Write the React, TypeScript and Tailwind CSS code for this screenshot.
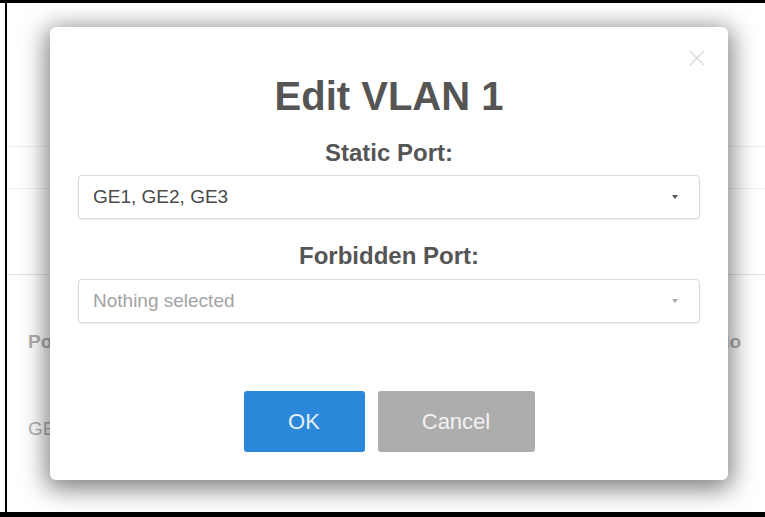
import React from "react";

function Caret({ light }: { light?: boolean }) {
  return (
    <span
      className={
        "w-0 h-0 border-x-[3px] border-t-[4px] border-x-transparent " +
        (light ? "border-t-[#aaa]" : "border-t-[#555]")
      }
    />
  );
}

function SelectBox({ value, placeholder }: { value?: string; placeholder?: string }) {
  return (
    <div className="w-full h-[44px] flex items-center justify-between pl-[14px] pr-[21px] bg-white border border-[#dcdcdc] rounded-[4px] shadow-[0_1px_2px_rgba(0,0,0,0.08)]">
      {value ? (
        <span className="text-[19px] text-[#4a4a4a]">{value}</span>
      ) : (
        <span className="text-[19px] text-[#a3a3a3]">{placeholder}</span>
      )}
      <Caret light={!value} />
    </div>
  );
}

export default function App() {
  return (
    <div className="relative w-[765px] h-[517px] bg-white border-t-[3px] border-b-[5px] border-black overflow-hidden font-['Liberation_Sans',Arial,sans-serif]">
      {/* page behind the dialog */}
      <div className="h-full ml-[5px] border-l-2 border-black text-[#b0b0b0]">
        <div className="h-[144px] border-b border-[#eee]" />
        <div className="h-[42px] border-b border-[#eee]" />
        <div className="h-[86px] border-b border-[#e3e3e3]" />
        <div className="h-[134px] flex items-center justify-between pl-[21px] pr-[24px] text-[19px] font-bold">
          <span>Port</span>
          <span>No</span>
        </div>
        <div className="h-[40px] flex items-center pl-[21px] text-[19px]">
          <span>GE1</span>
        </div>
      </div>

      {/* dialog */}
      <div className="absolute left-[50px] top-[24px] w-[678px] h-[453px] bg-white rounded-[6px] shadow-[0_5px_24px_4px_rgba(0,0,0,0.5)] flex flex-col items-center px-[28px]">
        <button className="absolute right-[23px] top-[23px] w-[16px] h-[16px]">
          <svg viewBox="0 0 16 16" className="w-[16px] h-[16px]" fill="none" stroke="#d6d6d6" strokeWidth="1.3">
            <path d="M1 1 L15 15 M15 1 L1 15" />
          </svg>
        </button>
        <h1 className="mt-[49px] text-[40px] leading-[40px] font-bold text-[#555]">Edit VLAN 1</h1>
        <div className="mt-[23px] text-[24px] leading-[28px] font-bold text-[#555]">Static Port:</div>
        <div className="mt-[8px] w-full">
          <SelectBox value="GE1, GE2, GE3" />
        </div>
        <div className="mt-[23px] text-[24px] leading-[28px] font-bold text-[#555]">Forbidden Port:</div>
        <div className="mt-[9px] w-full">
          <SelectBox placeholder="Nothing selected" />
        </div>
        <div className="mt-[68px] flex gap-[13px]">
          <button className="w-[121px] h-[61px] rounded-[3px] bg-[#2b87da] text-[22px] text-[#e6f1fb]">OK</button>
          <button className="w-[157px] h-[61px] rounded-[3px] bg-[#adadad] text-[22px] text-[#f2f2f2]">Cancel</button>
        </div>
      </div>
    </div>
  );
}
